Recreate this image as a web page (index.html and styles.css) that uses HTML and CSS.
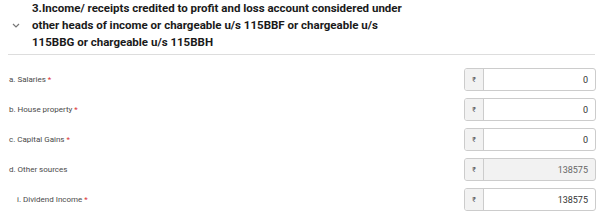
FILE: index.html
```html
<!DOCTYPE html>
<html lang="en">
<head>
  <meta charset="UTF-8">
  <title>Income credited to P&amp;L</title>
  <link rel="stylesheet" href="styles.css">
</head>
<body>
  <!-- Section header -->
  <div class="section-head">
    <svg class="chevron" width="8" height="5" viewBox="0 0 8 5"><path d="M1 1 L4 4 L7 1" fill="none" stroke="#777" stroke-width="1.2"/></svg>
    <div class="section-title">3.Income/ receipts credited to profit and loss account considered under other heads of income or chargeable u/s 115BBF or chargeable u/s 115BBG or chargeable u/s 115BBH</div>
  </div>

  <!-- Rows -->
  <div class="rows">
    <div class="row">
      <div class="label">a. Salaries <span class="req">*</span></div>
      <div class="amount"><span class="rupee">₹</span><span class="value">0</span></div>
    </div>
    <div class="row">
      <div class="label">b. House property <span class="req">*</span></div>
      <div class="amount"><span class="rupee">₹</span><span class="value">0</span></div>
    </div>
    <div class="row">
      <div class="label">c. Capital Gains <span class="req">*</span></div>
      <div class="amount"><span class="rupee">₹</span><span class="value">0</span></div>
    </div>
    <div class="row">
      <div class="label">d. Other sources</div>
      <div class="amount disabled"><span class="rupee">₹</span><span class="value">138575</span></div>
    </div>
    <div class="row">
      <div class="label sub">i. Dividend Income <span class="req">*</span></div>
      <div class="amount"><span class="rupee">₹</span><span class="value">138575</span></div>
    </div>
  </div>
</body>
</html>
```

FILE: styles.css
```css
body {
  margin: 0;
  font-family: Roboto, 'Noto Sans', sans-serif;
  background: #fff;
  color: #222;
}
/* Section header with chevron */
.section-head {
  display: flex;
  align-items: center;
  margin: 0 5px 0 8px;
  padding: 2px 0 5px 0;
  border-bottom: 1px solid #ddd;
  height: 47px;
}
.chevron {
  margin: 0 12px 0 4px;
  flex-shrink: 0;
}
.section-title {
  font-size: 11.5px;
  font-weight: bold;
  line-height: 17px;
  color: #1a1a1a;
  width: 375px;
}
/* Form rows */
.rows {
  padding-top: 13px;
}
.row {
  display: flex;
  align-items: center;
  justify-content: space-between;
  height: 23px;
  margin-bottom: 7px;
  padding: 0 4px 0 9px;
}
.label {
  font-size: 8px;
  color: #4a4a4a;
}
.label.sub {
  padding-left: 8px;
}
.req {
  color: #d33;
}
.amount {
  display: flex;
  width: 130px;
  height: 21px;
  border: 1px solid #ccc;
  border-radius: 3px;
  background: #fff;
  overflow: hidden;
}
.amount.disabled {
  background: #f2f2f2;
}
.rupee {
  width: 18px;
  display: flex;
  align-items: center;
  justify-content: center;
  background: #f2f2f2;
  border-right: 1px solid #ccc;
  font-size: 7px;
  color: #555;
}
.value {
  flex: 1;
  display: flex;
  align-items: center;
  justify-content: flex-end;
  padding-right: 7px;
  font-size: 9px;
  color: #333;
}
.disabled .value {
  color: #666;
}
```
